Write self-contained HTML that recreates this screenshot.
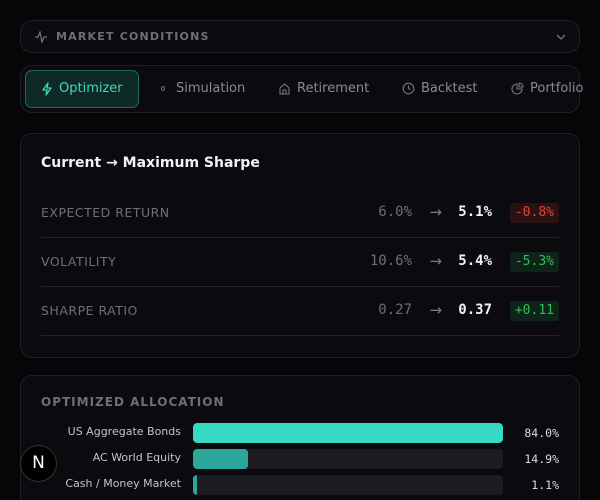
<!DOCTYPE html>
<html style="width:600px;height:500px;overflow:hidden"><head><style>
*{box-sizing:border-box;margin:0;padding:0}
body{width:600px;height:500px;background:#060609;font-family:"DejaVu Sans","Liberation Sans",sans-serif;position:relative;overflow:hidden;color:#ddd}
.box{position:absolute;border:1px solid #1f1f26;background:#0b0b0f;border-radius:12px}
.mono{font-family:"DejaVu Sans Mono","Liberation Mono",monospace}
.tab{position:absolute;top:81px;font-size:13px;color:#8a8a93;display:flex;align-items:center;gap:6px}
.row{position:absolute;left:41px;width:518px;height:49px;border-bottom:1px solid #22222a}
.lab{position:absolute;left:0;top:16px;font-size:12.5px;color:#6e6e76;letter-spacing:.5px}
.old{position:absolute;right:147px;top:15px;font-size:14px;color:#6e6e76}
.arr{position:absolute;right:117px;top:14px;font-size:15px;color:#7a7a80}
.new{position:absolute;right:67px;top:15px;font-size:14px;color:#f2f2f2;font-weight:bold}
.bd{position:absolute;right:0;top:14px;height:20px;padding:0 5px;line-height:20px;font-size:13px;border-radius:3px}
.al{position:absolute;right:419px;font-size:11px;color:#c4c4c8;text-align:right;white-space:nowrap}
.bar{position:absolute;left:193px;width:310px;height:20px;background:#1c1c22;border-radius:4px;overflow:hidden}
.bar i{display:block;height:100%;border-radius:4px}
.pc{position:absolute;right:41px;font-size:11.5px;color:#dcdcdc}
</style></head><body>
<div class="box" style="left:20px;top:20px;width:560px;height:33px">
<svg style="position:absolute;left:13px;top:10px" width="14" height="12" viewBox="0 0 14 12"><path d="M1 6h3l2-5 2 10 2-5h3" fill="none" stroke="#777" stroke-width="1.2"/></svg>
<div style="position:absolute;left:35px;top:9px;font-size:11px;font-weight:bold;color:#6f6f78;letter-spacing:1.2px">MARKET CONDITIONS</div>
<svg style="position:absolute;right:13px;top:12px" width="10" height="8"><path d="M1 2l4 4 4-4" fill="none" stroke="#777" stroke-width="1.3"/></svg>
</div>
<div class="box" style="left:20px;top:65px;width:560px;height:48px"></div>
<div style="position:absolute;left:25px;top:70px;width:114px;height:38px;border:1px solid #1e6b5c;background:#0f2a26;border-radius:7px"></div>
<div class="tab" style="left:41px;color:#3dd9bc"><svg width="12" height="14" viewBox="0 0 12 14"><path d="M7 1L2 8h4l-1 5 5-7H6z" fill="none" stroke="#3dd9bc" stroke-width="1.3" stroke-linejoin="round"/></svg>Optimizer</div>
<div class="tab" style="left:161px"><span style="display:inline-block;width:4px;height:5px;border:1px solid #777;border-radius:50%;margin-right:5px"></span>Simulation</div>
<div class="tab" style="left:278px"><svg width="13" height="13" viewBox="0 0 13 13"><path d="M2 6l4.5-4 4.5 4v6H2z M5 12V8h3v4" fill="none" stroke="#777" stroke-width="1.1"/></svg>Retirement</div>
<div class="tab" style="left:402px"><svg width="13" height="13" viewBox="0 0 13 13"><circle cx="6.5" cy="6.5" r="5.3" fill="none" stroke="#777" stroke-width="1.1"/><path d="M6.5 3.5v3l2 1.3" fill="none" stroke="#777" stroke-width="1.1"/></svg>Backtest</div>
<div class="tab" style="left:511px"><svg width="13" height="13" viewBox="0 0 13 13"><path d="M6 2a5 5 0 1 0 5 5H6z M8 1v4h4a4 4 0 0 0-4-4z" fill="none" stroke="#777" stroke-width="1.1"/></svg>Portfolio</div>

<div class="box" style="left:20px;top:133px;width:560px;height:225px"></div>
<div style="position:absolute;left:41px;top:155px;font-size:14px;font-weight:bold;color:#f2f2f2">Current → Maximum Sharpe</div>
<div class="row" style="top:189px"><div class="lab">EXPECTED RETURN</div><div class="old mono">6.0%</div><div class="arr">→</div><div class="new mono">5.1%</div><div class="bd mono" style="background:#2a1212;color:#e0443a">-0.8%</div></div>
<div class="row" style="top:238px"><div class="lab">VOLATILITY</div><div class="old mono">10.6%</div><div class="arr">→</div><div class="new mono">5.4%</div><div class="bd mono" style="background:#0f2418;color:#2fbf5a">-5.3%</div></div>
<div class="row" style="top:287px"><div class="lab">SHARPE RATIO</div><div class="old mono">0.27</div><div class="arr">→</div><div class="new mono">0.37</div><div class="bd mono" style="background:#0f2418;color:#2fbf5a">+0.11</div></div>

<div class="box" style="left:20px;top:375px;width:560px;height:140px"></div>
<div style="position:absolute;left:41px;top:395px;font-size:12px;font-weight:bold;color:#6f6f78;letter-spacing:1px">OPTIMIZED ALLOCATION</div>
<div class="al" style="top:425px">US Aggregate Bonds</div>
<div class="bar" style="top:423px"><i style="width:100%;background:#36d9c4"></i></div>
<div class="pc mono" style="top:426px">84.0%</div>
<div class="al" style="top:451px">AC World Equity</div>
<div class="bar" style="top:449px"><i style="width:55px;background:#2ca89b"></i></div>
<div class="pc mono" style="top:452px">14.9%</div>
<div class="al" style="top:477px">Cash / Money Market</div>
<div class="bar" style="top:475px"><i style="width:4px;background:#2ca89b"></i></div>
<div class="pc mono" style="top:478px">1.1%</div>
<div style="position:absolute;left:20px;top:445px;width:37px;height:37px;border-radius:50%;background:#000;border:1px solid #333;color:#fff;font-size:17px;text-align:center;line-height:35px">N</div>
</body></html>
